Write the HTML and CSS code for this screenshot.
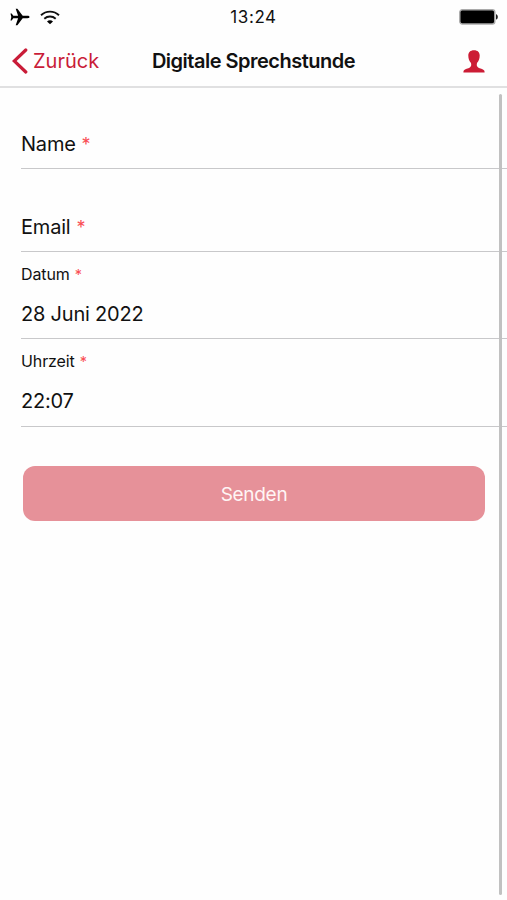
FILE: index.html
```html
<!DOCTYPE html>
<html lang="de">
<head>
    <meta charset="UTF-8">
    <meta name="viewport" content="width=device-width, initial-scale=1.0">
    <title>Digitale Sprechstunde</title>
    <link rel="stylesheet" href="styles.css">
</head>
<body>
    <div class="status-bar">
        <div class="status-left">
            <svg class="icon-plane" width="20" height="18" viewBox="0 0 20 18">
                <path d="M19.5 9c0-.8-.8-1.2-2-1.2h-4.8L7.4.8H5.700l2.400 7H3.300L1.700 5.400H.5l.8 3.600-.8 3.600h1.200l1.600-2.400h4.800l-2.400 7h1.700l5.300-7h4.800c1.200 0 2-.4 2-1.200z"/>
            </svg>
            <svg class="icon-wifi" width="20" height="15" viewBox="0 0 20 15">
                <path d="M1 5.3c5-4.9 13-4.9 18 0M4.3 8.7c3.3-3 8.1-3 11.4 0" fill="none" stroke="#111" stroke-width="1.9"/>
                <path d="M10 14.2l-3-2.7c1.7-1.6 4.3-1.6 6 0z"/>
            </svg>
        </div>
        <span class="time">13:24</span>
        <svg class="icon-battery" width="40" height="16" viewBox="0 0 40 16">
            <rect x=".8" y=".8" width="35" height="14.2" rx="2.5" fill="#000" stroke="#aaa" stroke-width="1.4"/>
            <path d="M37 5.2c2.4.5 2.4 4.9 0 5.4z" fill="#222"/>
        </svg>
    </div>

    <header class="header">
        <a class="back">
            <svg width="16" height="26" viewBox="0 0 16 26">
                <path d="M13.8 2L2.2 13l11.6 11" fill="none" stroke="#c91c38" stroke-width="3.200" stroke-linecap="round"/>
            </svg>
            <span>Zurück</span>
        </a>
        <h1 class="title">Digitale Sprechstunde</h1>
        <a class="profile">
            <svg width="22" height="23" viewBox="0 0 22 23">
                <path d="M11 .2C7.200.2 5.300 2.300 5.300 5.600c0 2.900 1 5.700 2.700 7.500.5 2.100.2 3.500-1.100 4.300-1.700 1-5 1.400-6.100 3.200-.3.500-.4 1.200-.4 1.800h21.200c0-.6-.1-1.300-.4-1.800-1.100-1.800-4.400-2.200-6.100-3.200-1.300-.8-1.600-2.200-1.100-4.300 1.700-1.800 2.700-4.600 2.700-7.500C16.700 2.300 14.800.2 11 .2z" fill="#cc1c35"/>
            </svg>
        </a>
    </header>

    <main class="content">
        <form class="form">
            <div class="field">
                <label class="label">Name <span class="required">*</span></label>
            </div>
            <div class="field">
                <label class="label">Email <span class="required">*</span></label>
            </div>
            <div class="field field-filled">
                <label class="label-small">Datum <span class="required">*</span></label>
                <div class="value">28 Juni 2022</div>
            </div>
            <div class="field field-filled">
                <label class="label-small">Uhrzeit <span class="required">*</span></label>
                <div class="value">22:07</div>
            </div>
            <button class="button" type="button">Senden</button>
        </form>
        <div class="scrollbar"></div>
    </main>
</body>
</html>
```
FILE: styles.css
```css
:root {
    --primary: #c91c38;
    --button: #e69199;
    --required: #f94e55;
    --line: #c8c8ca;
    --text: #111111;
}

* {
    margin: 0;
    padding: 0;
    box-sizing: border-box;
    font-family: Inter, "Liberation Sans", sans-serif;
}

body {
    background: #fefefe;
    color: var(--text);
    height: 100vh;
    display: flex;
    flex-direction: column;
    overflow: hidden;
}

.status-bar {
    height: 34px;
    padding: 0 8px 0 10px;
    display: grid;
    grid-template-columns: 1fr auto 1fr;
    align-items: center;
    flex-shrink: 0;
}

.status-left {
    display: flex;
    align-items: center;
    gap: 10px;
}

.time {
    font-size: 17px;
    line-height: 20px;
    letter-spacing: 0.6px;
    padding-right: 2px;
}

.icon-battery {
    justify-self: end;
}

.header {
    height: 54px;
    padding: 2px 22px 0 12px;
    border-bottom: 2px solid #e0e0e1;
    display: grid;
    grid-template-columns: 1fr auto 1fr;
    align-items: center;
    flex-shrink: 0;
}

.back {
    display: flex;
    align-items: center;
    gap: 5px;
    color: var(--primary);
    font-size: 20px;
}

.title {
    font-size: 20px;
    font-weight: 600;
    letter-spacing: -0.5px;
    /* evens out the unequal side paddings */
    padding-left: 10px;
}

.profile {
    justify-self: end;
    display: flex;
}

.content {
    flex: 1;
    position: relative;
}

.form {
    padding-left: 21px;
}

.field {
    height: 83px;
    border-bottom: 1px solid var(--line);
    display: flex;
    flex-direction: column;
    justify-content: flex-end;
    padding-bottom: 12px;
}

.field:first-child {
    height: 81px;
}

.field-filled {
    height: 87px;
}

.field-filled + .field-filled {
    height: 88px;
    padding-bottom: 13px;
}

.label,
.value {
    font-size: 20px;
    line-height: 24px;
    letter-spacing: -0.2px;
}

.label-small {
    font-size: 16px;
    line-height: 20px;
    letter-spacing: -0.1px;
    margin-bottom: 18px;
}

.required {
    color: var(--required);
    font-size: 0.9em;
    line-height: 1;
    margin-left: 0.5px;
}

.button {
    display: block;
    width: 462px;
    height: 55px;
    margin: 39px 0 0 2px;
    padding-top: 2px;
    background: var(--button);
    color: #fff5f5;
    border: none;
    border-radius: 12px;
    font-size: 19px;
    letter-spacing: -0.3px;
}

/* overlay scroll indicator */
.scrollbar {
    position: absolute;
    top: 6px;
    right: 5px;
    bottom: 5px;
    width: 3px;
    border-radius: 2px;
    background: #c1c1c1;
}
```
